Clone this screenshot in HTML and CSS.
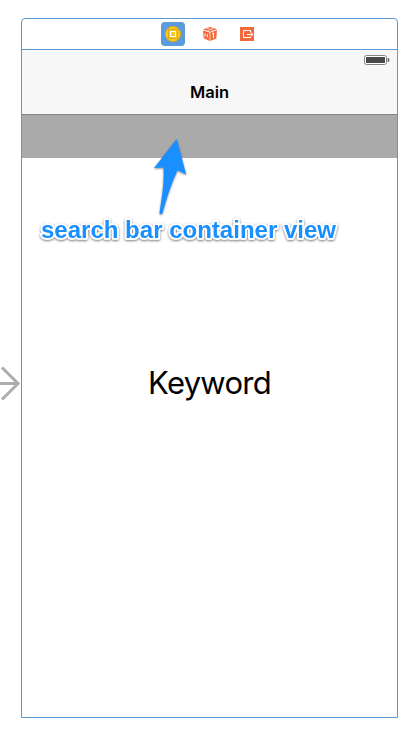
FILE: index.html
```html
<!DOCTYPE html>
<html lang="en">
<head>
<meta charset="utf-8">
<title>Main</title>
<link rel="stylesheet" href="styles.css">
</head>
<body>
<main class="canvas">
  <svg class="entry" width="21" height="36" viewBox="0 0 21 36"><path d="M0 18.500H18M2 2.500L18 18.500L2 34.500" fill="none" stroke="#adadad" stroke-width="3"/></svg>
  <section class="scene">
    <div class="dock">
      <div class="dock-item selected">
        <svg width="16" height="16" viewBox="0 0 16 16"><circle cx="8" cy="8" r="7.500" fill="#fac81e" stroke="#e5ad10"/><rect x="3.500" y="3.500" width="9" height="9" fill="none" stroke="#d9a514" stroke-width=".8"/><rect x="5.500" y="5.500" width="5" height="5" fill="#f8c832" stroke="#fff"/></svg>
      </div>
      <div class="dock-item">
        <svg width="16" height="16" viewBox="0 0 16 16"><g fill="#f2693c"><path d="M1 3.600L8 1L15 3.300L8.300 5.700Z"/><path d="M1 4.500L7.600 6.400V15L1.700 12.200Z"/><path d="M8.300 6.400L15 4.300L14.300 12.400L8.300 15Z"/></g><path d="M4.700 2.300L11.500 4.500M11.500 2.300L4.900 4.800" fill="none" stroke="#fff" stroke-width=".5"/><path d="M3 7.500V10.500M5.300 8V11.500" fill="none" stroke="#fff" stroke-width=".9"/><path d="M10.300 8L11.500 7.300V12" fill="none" stroke="#fff" stroke-width="1.100"/></svg>
      </div>
      <div class="dock-item">
        <svg width="16" height="16" viewBox="0 0 16 16"><rect x="1" y="1" width="14" height="14" fill="#f2693c"/><path d="M11.500 6.500V4.500H4.500V11.500H11.500V10.500M8 8.500H13.500M12.200 6.800L14 8.500L12.200 10.200" fill="none" stroke="#fff" stroke-width="1"/></svg>
      </div>
    </div>
    <header class="nav">
      <div class="status">
        <svg width="26" height="10" viewBox="0 0 26 10"><rect x=".5" y=".5" width="22" height="9" rx="2" fill="#fff" stroke="#828282"/><rect x="2" y="2" width="19" height="6" rx=".5" fill="#484848"/><path d="M24 3V7Q25 6.500 25 5T24 3Z" fill="#555" stroke="#555" stroke-width=".6"/></svg>
      </div>
      <h1 class="title">Main</h1>
    </header>
    <div class="search-container"></div>
    <div class="content"><p class="keyword">Keyword</p></div>
  </section>
  <svg class="annotation" width="418" height="120" viewBox="0 130 418 120">
    <path class="pointer" d="M176.700 139L186.200 174.500L177.500 170.300C171.500 183 166.500 198 162.500 213Q161 215.500 159.500 213C161.500 199 164.500 184 163.500 167.500L154 168Z"/>
    <text class="label" x="41" y="238" textLength="295" lengthAdjust="spacingAndGlyphs">search bar container view</text>
  </svg>
</main>
</body>
</html>
```
FILE: styles.css
```css
* { box-sizing: border-box; }
body { margin: 0; background: #fff; }
svg { display: block; }
.canvas {
  position: relative;
  display: flex;
  width: 418px;
  height: 744px;
  padding-top: 18px;
  overflow: hidden;
  font-family: Inter, sans-serif;
  color: #000;
}
.entry { flex: none; margin-top: 347px; }
.scene {
  display: flex;
  flex-direction: column;
  width: 377px;
  height: 700px;
  border: 1px solid #5b9bd5;
  border-radius: 4px 4px 0 0;
  overflow: hidden;
}
.dock {
  display: flex;
  justify-content: center;
  align-items: center;
  gap: 13px;
  height: 31px;
  border-bottom: 1px solid #5b9bd5;
}
.dock-item {
  display: grid;
  place-items: center;
  width: 24px;
  height: 24px;
  border-radius: 4px;
}
.selected { background: #5b9bdc; }
.nav {
  height: 65px;
  background: #f7f7f7;
  border-bottom: 1px solid #858585;
}
.status {
  display: flex;
  justify-content: flex-end;
  height: 20px;
  padding: 5px 7px 0 0;
}
.title {
  margin: 0;
  font-size: 16.500px;
  font-weight: 600;
  line-height: 44px;
  text-align: center;
}
.search-container { height: 43px; background: #aaa; }
.content {
  flex: 1;
  padding-top: 205px;
  text-align: center;
}
.keyword {
  margin: 0;
  font-size: 31px;
  line-height: 40px;
  letter-spacing: -.75px;
}
.annotation { position: absolute; left: 0; top: 130px; }
.pointer {
  fill: #1a8fff;
  filter: drop-shadow(0 1px 1px rgba(0, 0, 0, .45));
}
.label {
  font: bold 24px "Liberation Sans", sans-serif;
  fill: #1a8fff;
  stroke: #fff;
  stroke-width: 4px;
  stroke-linejoin: round;
  paint-order: stroke;
  filter: drop-shadow(0 1.500px 1px rgba(0, 0, 0, .5));
}
```
